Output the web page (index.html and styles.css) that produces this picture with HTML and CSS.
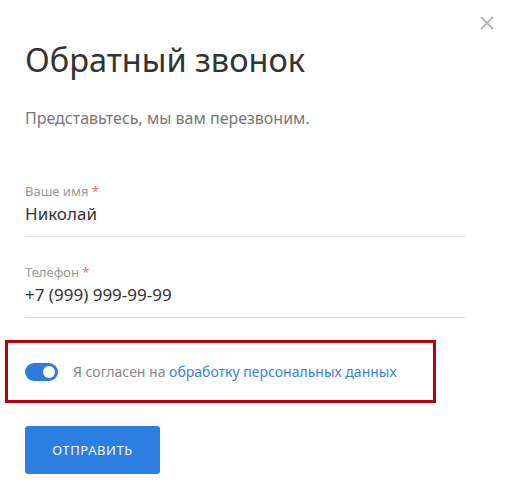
FILE: index.html
```html
<!DOCTYPE html>
<html lang="ru">
<head>
<meta charset="utf-8">
<title>Обратный звонок</title>
<link rel="stylesheet" href="styles.css">
</head>
<body>
<div class="modal">
  <button class="close" aria-label="Закрыть">
    <svg width="14" height="14" viewBox="0 0 14 14"><path d="M1 1L13 13M13 1L1 13" stroke="#b9b9b9" stroke-width="2" fill="none"/></svg>
  </button>
  <h1 class="title">Обратный звонок</h1>
  <p class="subtitle">Представьтесь, мы вам перезвоним.</p>
  <div class="field">
    <div class="label">Ваше имя <span class="req">*</span></div>
    <div class="value">Николай</div>
  </div>
  <div class="field field-next">
    <div class="label">Телефон <span class="req">*</span></div>
    <div class="value">+7 (999) 999-99-99</div>
  </div>
  <div class="consent">
    <span class="toggle"><span class="knob"></span></span>
    <span class="consent-text">Я согласен на <a class="link" href="#">обработку персональных данных</a></span>
  </div>
  <button class="submit">ОТПРАВИТЬ</button>
</div>
</body>
</html>
```
FILE: styles.css
```css
html, body {
  margin: 0;
  background: #fff;
}
body {
  font-family: "Noto Sans", "DejaVu Sans", sans-serif;
}
.modal {
  position: relative;
  padding: 40px 42px 0 25px;
  width: 440px;
}
.close {
  position: absolute;
  top: 16px;
  right: 13px;
  border: 0;
  background: none;
  padding: 0;
  width: 14px;
  height: 14px;
  display: block;
}
.close svg { display: block; }
.title {
  margin: 0;
  font-size: 32.5px;
  line-height: 40px;
  font-weight: 400;
  color: #333;
}
.subtitle {
  margin: 28px 0 0;
  font-size: 16px;
  line-height: 20px;
  color: #777;
}
.field {
  margin-top: 55px;
  border-bottom: 1px solid #dedede;
  padding-bottom: 10px;
}
.field-next { margin-top: 27px; }
.label {
  font-size: 13px;
  line-height: 16px;
  color: #999;
}
.req { color: #f07070; }
.value {
  margin-top: 3px;
  font-size: 17px;
  line-height: 24px;
  color: #333;
}
.consent {
  box-sizing: border-box;
  margin: 22px 0 0 -20px;
  width: 431px;
  height: 63px;
  border: 3px solid #b5000f;
  display: flex;
  align-items: center;
  padding-left: 17px;
  gap: 15px;
}
.toggle {
  width: 33px;
  height: 18px;
  border-radius: 9px;
  background: #2d7de0;
  position: relative;
  flex: none;
}
.knob {
  position: absolute;
  right: 3px;
  top: 3px;
  width: 12px;
  height: 12px;
  border-radius: 50%;
  background: #fff;
}
.consent-text {
  font-size: 14px;
  color: #888;
}
.link {
  color: #3a7fdc;
  text-decoration: none;
}
.submit {
  margin-top: 23px;
  width: 135px;
  height: 48px;
  border: 0;
  border-radius: 3px;
  background: #2c7fe0;
  color: #f4f7ff;
  font-family: inherit;
  font-size: 13px;
  letter-spacing: 0.6px;
  display: block;
  padding: 0;
}
```
